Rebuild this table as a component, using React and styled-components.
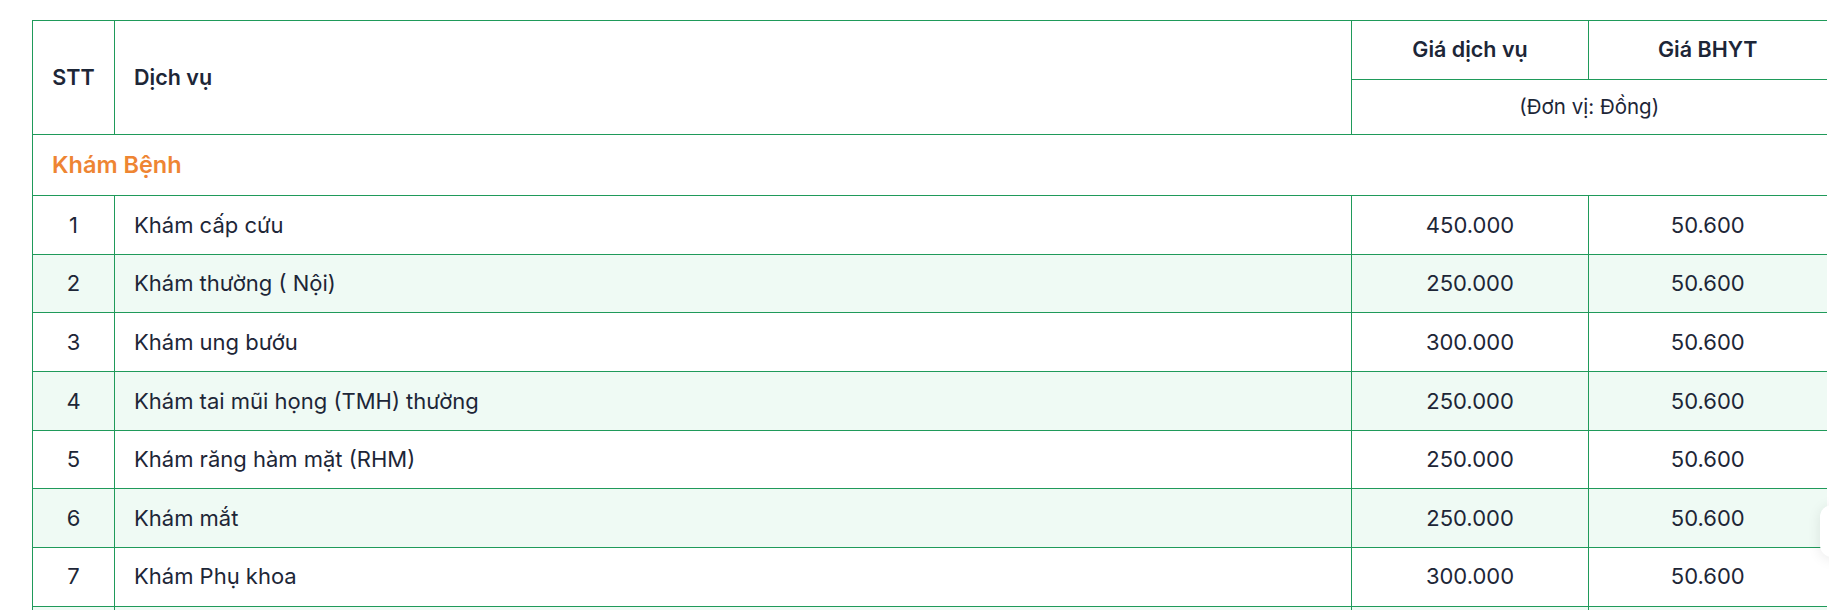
import React from "react";
import styled, { createGlobalStyle } from "styled-components";

const GREEN = "#1f9a5a";
const TEXT = "#1d2637";

const Global = createGlobalStyle`
  html, body { margin: 0; padding: 0; background: #ffffff; }
  body { font-family: Inter, "Noto Sans", sans-serif; color: ${TEXT}; overflow: hidden; }
`;

const Page = styled.div`
  padding: 20px 0 0 32px;
  width: 1829px;
  height: 610px;
  box-sizing: border-box;
  overflow: hidden;
`;

const Table = styled.table`
  width: 1794px;
  border-collapse: collapse;
  table-layout: fixed;
  font-size: 22px;
`;

const HeadCell = styled.th`
  border: 1px solid ${GREEN};
  border-right: ${(p) => (p.$last ? "none" : `1px solid ${GREEN}`)};
  font-weight: 600;
  font-size: 21.5px;
  text-align: ${(p) => p.$align || "center"};
  padding: 0 19px;
  height: ${(p) => p.$h || 58}px;
  box-sizing: border-box;
  color: ${TEXT};
  line-height: 1.3;
`;

const UnitCell = styled.th`
  border: 1px solid ${GREEN};
  border-right: none;
  font-weight: 400;
  font-size: 20.5px;
  text-align: center;
  height: 55px;
  padding: 0;
  box-sizing: border-box;
  color: ${TEXT};
  line-height: 1.3;
`;

const GroupCell = styled.td`
  border: 1px solid ${GREEN};
  border-right: none;
  color: #ee8533;
  font-weight: 600;
  font-size: 23.5px;
  padding: 0 19px;
  height: 61px;
  box-sizing: border-box;
  line-height: 1.3;
`;

const Row = styled.tr`
  background: ${(p) => (p.$striped ? "#effaf4" : "#ffffff")};
`;

const Cell = styled.td`
  border: 1px solid ${GREEN};
  border-right: ${(p) => (p.$last ? "none" : `1px solid ${GREEN}`)};
  text-align: ${(p) => p.$align || "left"};
  padding: 0 19px;
  height: 58.67px;
  box-sizing: border-box;
  line-height: 1.3;
`;

const FloatCard = styled.div`
  position: fixed;
  left: 1820px;
  top: 505px;
  width: 60px;
  height: 52px;
  border-radius: 12px;
  background: #ffffff;
  box-shadow: 0 2px 14px rgba(0, 0, 0, 0.09);
`;

const rows = [
  ["1", "Khám cấp cứu", "450.000", "50.600"],
  ["2", "Khám thường ( Nội)", "250.000", "50.600"],
  ["3", "Khám ung bướu", "300.000", "50.600"],
  ["4", "Khám tai mũi họng (TMH) thường", "250.000", "50.600"],
  ["5", "Khám răng hàm mặt (RHM)", "250.000", "50.600"],
  ["6", "Khám mắt", "250.000", "50.600"],
  ["7", "Khám Phụ khoa", "300.000", "50.600"],
  ["8", "Khám Nhi", "250.000", "50.600"],
];

export default function App() {
  return (
    <>
      <Global />
      <Page>
        <Table>
          <colgroup>
            <col style={{ width: 82 }} />
            <col style={{ width: 1237 }} />
            <col style={{ width: 237 }} />
            <col style={{ width: 238 }} />
          </colgroup>
          <thead>
            <tr>
              <HeadCell rowSpan={2} $align="center">STT</HeadCell>
              <HeadCell rowSpan={2} $align="left">Dịch vụ</HeadCell>
              <HeadCell $h={59}>Giá dịch vụ</HeadCell>
              <HeadCell $h={59} $last>Giá BHYT</HeadCell>
            </tr>
            <tr>
              <UnitCell colSpan={2}>(Đơn vị: Đồng)</UnitCell>
            </tr>
          </thead>
          <tbody>
            <tr>
              <GroupCell colSpan={4}>Khám Bệnh</GroupCell>
            </tr>
            {rows.map((r, i) => (
              <Row key={r[0]} $striped={i % 2 === 1}>
                <Cell $align="center">{r[0]}</Cell>
                <Cell>{r[1]}</Cell>
                <Cell $align="center">{r[2]}</Cell>
                <Cell $align="center" $last>{r[3]}</Cell>
              </Row>
            ))}
          </tbody>
        </Table>
      </Page>
      <FloatCard />
    </>
  );
}
